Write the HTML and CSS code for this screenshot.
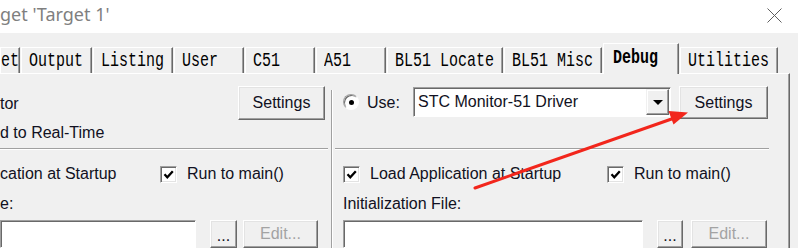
FILE: index.html
```html
<!DOCTYPE html>
<html>
<head>
<meta charset="utf-8">
<title>Options for Target</title>
<link rel="stylesheet" href="styles.css">
</head>
<body>
<div class="window">
  <header class="titlebar">
    <span class="title">get 'Target 1'</span>
    <svg class="close" width="15" height="15" viewBox="0 0 15 15"><path d="M0.5 0.5 L14.5 14.5 M14.5 0.5 L0.5 14.5" stroke="#5f5f5f" stroke-width="1" fill="none"/></svg>
  </header>

  <nav class="tabstrip">
    <div class="tab tab-cut"><span>et</span></div>
    <div class="tab"><span>Output</span></div>
    <div class="tab"><span>Listing</span></div>
    <div class="tab"><span>User</span></div>
    <div class="tab"><span>C51</span></div>
    <div class="tab"><span>A51</span></div>
    <div class="tab"><span>BL51 Locate</span></div>
    <div class="tab"><span>BL51 Misc</span></div>
    <div class="tab tab-active"><span>Debug</span></div>
    <div class="tab"><span>Utilities</span></div>
  </nav>

  <main class="panel">
    <section class="col col-left">
      <div class="top top-left">
        <div class="labels">
          <div class="line">tor</div>
          <div class="line">d to Real-Time</div>
        </div>
        <button class="btn btn-settings-left">Settings</button>
      </div>
      <div class="etched etched-left"></div>
      <div class="bottom">
        <div class="row-check">
          <span class="line lead-left">cation at Startup</span>
          <span class="check"><svg width="11" height="11" viewBox="0 0 11 11"><path d="M1.5 5.2 L4.3 8.2 L9.8 2.3" stroke="#000" stroke-width="2.3" fill="none"/></svg></span>
          <span class="line check-text">Run to main()</span>
        </div>
        <div class="line caption">e:</div>
        <div class="file-row">
          <div class="input input-left"></div>
          <button class="btn btn-dots btn-dots-left">...</button>
          <button class="btn btn-edit btn-edit-left">Edit...</button>
        </div>
      </div>
    </section>

    <div class="vdivider"></div>

    <section class="col col-right">
      <div class="top top-right">
        <span class="radio"></span>
        <span class="line use-label">Use:</span>
        <div class="combo">
          <span class="combo-text">STC Monitor-51 Driver</span>
          <span class="combo-btn"><span class="tri"></span></span>
        </div>
        <button class="btn btn-settings-right">Settings</button>
      </div>
      <div class="etched etched-right"></div>
      <div class="bottom bottom-right">
        <div class="row-check">
          <span class="check-group">
            <span class="check"><svg width="11" height="11" viewBox="0 0 11 11"><path d="M1.5 5.2 L4.3 8.2 L9.8 2.3" stroke="#000" stroke-width="2.3" fill="none"/></svg></span>
            <span class="line check-text">Load Application at Startup</span>
          </span>
          <span class="check"><svg width="11" height="11" viewBox="0 0 11 11"><path d="M1.5 5.2 L4.3 8.2 L9.8 2.3" stroke="#000" stroke-width="2.3" fill="none"/></svg></span>
          <span class="line check-text">Run to main()</span>
        </div>
        <div class="line caption">Initialization File:</div>
        <div class="file-row">
          <div class="input input-right"></div>
          <button class="btn btn-dots btn-dots-right">...</button>
          <button class="btn btn-edit btn-edit-right">Edit...</button>
        </div>
      </div>
    </section>
  </main>

  <svg class="arrow" width="798" height="248" viewBox="0 0 798 248">
    <line x1="475" y1="188" x2="673" y2="118.5" stroke="#f2261c" stroke-width="3" stroke-linecap="round"/>
    <polygon points="688,112.5 673.5,124.5 668.5,111" fill="#f2261c"/>
  </svg>
</div>
</body>
</html>
```

FILE: styles.css
```css
* { box-sizing: border-box; }

html, body {
  margin: 0;
  padding: 0;
}

body {
  width: 798px;
  height: 248px;
  overflow: hidden;
  background: #f0f0f0;
  font-family: "Liberation Sans", Arial, sans-serif;
  font-size: 16px;
  color: #111122;
}

.window {
  position: relative;
  width: 798px;
  height: 248px;
  overflow: hidden;
  display: flex;
  flex-direction: column;
}

/* ---------- title bar ---------- */
.titlebar {
  height: 33px;
  flex-shrink: 0;
  background: #fff;
  display: flex;
  justify-content: space-between;
  align-items: flex-start;
}

.title {
  font-family: "Noto Sans", "Open Sans", sans-serif;
  font-size: 18px;
  line-height: 24px;
  padding-top: 2px;
  color: #7f7f7f;
  white-space: nowrap;
}

.close {
  margin: 8px 16px 0 0;
}

/* ---------- tabs ---------- */
.tabstrip {
  height: 40px;
  flex-shrink: 0;
  display: flex;
  align-items: flex-end;
  gap: 1px;
  position: relative;
  z-index: 1;
}

.tab {
  height: 26px;
  min-width: 70px;
  padding: 1px 8px 0 7px;
  display: flex;
  align-items: center;
  background: #f0f0f0;
  border-top: 1px solid #fff;
  border-left: 1px solid #fff;
  border-right: 1px solid #696969;
  box-shadow: inset -1px 0 #a0a0a0;
  font-family: "Liberation Mono", "Courier New", monospace;
  font-size: 15px;
  color: #000;
  white-space: pre;
}

.tab span {
  display: inline-block;
  transform: scaleY(1.4);
}

.tab-cut {
  min-width: 0;
  width: 20px;
  padding: 1px 0 0 0;
}

.tab-active {
  height: 31px;
  margin-bottom: -1px;
  min-width: 76px;
  padding: 0 9px 2px 9px;
  font-weight: bold;
}

/* ---------- panel ---------- */
.panel {
  flex: 1;
  min-height: 0;
  width: 790px;
  display: flex;
  border-top: 1px solid #fff;
  border-right: 1px solid #696969;
  box-shadow: inset -1px 0 #a0a0a0;
}

.col {
  display: flex;
  flex-direction: column;
}

.col-left {
  width: 331px;
}

.col-right {
  flex: 1;
}

.vdivider {
  width: 2px;
  margin-top: 16px;
  border-left: 1px solid #a0a0a0;
  border-right: 1px solid #fff;
}

.line {
  line-height: 18px;
  white-space: nowrap;
}

.top {
  height: 78px;
  padding-top: 12px;
  display: flex;
}

.top-left {
  justify-content: space-between;
  padding-right: 6px;
}

.labels {
  padding-top: 9px;
  display: flex;
  flex-direction: column;
  gap: 11px;
}

.top-right {
  padding-left: 10px;
  align-items: flex-start;
}

.etched {
  height: 2px;
  border-top: 1px solid #a0a0a0;
  border-bottom: 1px solid #fff;
}

.etched-left {
  margin-right: 3px;
}

.etched-right {
  margin: 0 20px 0 2px;
}

.bottom {
  padding-top: 15px;
  display: flex;
  flex-direction: column;
}

.bottom-right {
  padding-left: 10px;
}

.row-check {
  height: 18px;
  display: flex;
  align-items: center;
}

.lead-left {
  width: 160px;
}

.check-group {
  width: 264px;
  display: flex;
  align-items: center;
}

.check-text {
  margin-left: 10px;
}

.caption {
  margin-top: 12px;
}

.file-row {
  margin-top: 7px;
  height: 28px;
  display: flex;
  flex-shrink: 0;
}

/* ---------- controls ---------- */
.btn {
  font: inherit;
  color: #111122;
  background: #f0f0f0;
  border: 1px solid;
  border-color: #fff #696969 #696969 #fff;
  box-shadow: inset -1px -1px #a0a0a0, inset 1px 1px #e3e3e3;
  padding: 0;
  display: flex;
  align-items: center;
  justify-content: center;
  height: 100%;
}

.btn-settings-left {
  width: 87px;
  height: 34px;
}

.btn-settings-right {
  width: 89px;
  height: 33px;
  margin-left: 8px;
}

.btn-dots {
  padding-bottom: 2px;
  align-items: flex-end;
}

.btn-dots-left {
  width: 27px;
  margin-left: 14px;
}

.btn-dots-right {
  width: 26px;
  margin-left: 14px;
}

.btn-edit {
  color: #a3a3a3;
}

.btn-edit-left {
  width: 75px;
  margin-left: 6px;
}

.btn-edit-right {
  width: 76px;
  margin-left: 8px;
}

.input {
  height: 100%;
  background: #fff;
  border: 1px solid;
  border-color: #a0a0a0 #fff #fff #a0a0a0;
  box-shadow: inset 1px 1px #696969;
}

.input-left {
  width: 196px;
}

.input-right {
  width: 300px;
}

.check {
  width: 17px;
  height: 17px;
  flex-shrink: 0;
  background: #fff;
  border: 1px solid;
  border-color: #a0a0a0 #fff #fff #a0a0a0;
  box-shadow: inset 1px 1px #696969, inset -1px -1px #e3e3e3;
  display: flex;
  align-items: center;
  justify-content: center;
}

.radio {
  width: 16px;
  height: 16px;
  margin-top: 8px;
  flex-shrink: 0;
  border-radius: 50%;
  background: #fff;
  border: 1px solid;
  border-color: #a0a0a0 #fff #fff #a0a0a0;
  box-shadow: inset 1px 1px #696969;
  display: flex;
  align-items: center;
  justify-content: center;
}

.radio::after {
  content: "";
  width: 5px;
  height: 5px;
  border-radius: 50%;
  background: #000;
}

.use-label {
  margin: 8px 13px 0 8px;
  width: 33px;
}

.combo {
  width: 258px;
  height: 30px;
  margin-top: 1px;
  padding: 1px;
  background: #fff;
  border: 1px solid;
  border-color: #a0a0a0 #fff #fff #a0a0a0;
  box-shadow: inset 1px 1px #696969;
  display: flex;
  align-items: center;
}

.combo-text {
  flex: 1;
  padding-left: 3px;
  line-height: 18px;
  white-space: nowrap;
}

.combo-btn {
  width: 23px;
  height: 100%;
  background: #f0f0f0;
  border: 1px solid;
  border-color: #f0f0f0 #696969 #696969 #f0f0f0;
  box-shadow: inset -1px -1px #a0a0a0, inset 1px 1px #fff;
  display: flex;
  align-items: center;
  justify-content: center;
}

.tri {
  width: 0;
  height: 0;
  border-left: 5px solid transparent;
  border-right: 5px solid transparent;
  border-top: 5px solid #000;
}

/* ---------- annotation ---------- */
.arrow {
  position: absolute;
  left: 0;
  top: 0;
  pointer-events: none;
  z-index: 5;
}
```
